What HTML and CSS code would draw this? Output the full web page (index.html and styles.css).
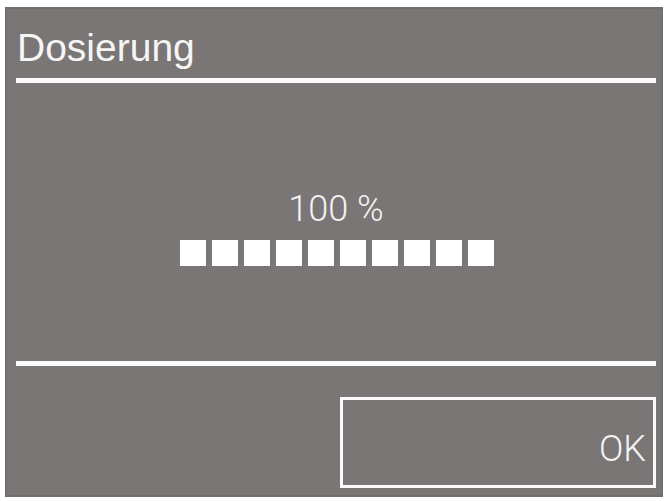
FILE: index.html
```html
<!DOCTYPE html>
<html lang="de">
<head>
<meta charset="utf-8">
<title>Dosierung</title>
<link rel="stylesheet" href="styles.css">
</head>
<body>
<div class="panel">
  <div class="title">Dosierung</div>
  <div class="rule"></div>
  <div class="progress">
    <div class="percent">100 %</div>
    <div class="blocks">
      <span class="block"></span><span class="block"></span><span class="block"></span><span class="block"></span><span class="block"></span><span class="block"></span><span class="block"></span><span class="block"></span><span class="block"></span><span class="block"></span>
    </div>
  </div>
  <div class="rule rule-bottom"></div>
  <div class="ok-button">OK</div>
</div>
</body>
</html>
```

FILE: styles.css
```css
html, body {
  margin: 0;
  padding: 0;
  background: #ffffff;
}

body {
  width: 668px;
  height: 501px;
  overflow: hidden;
  font-family: "Liberation Sans", Arial, sans-serif;
}

.panel {
  margin: 7px 0 0 5px;
  width: 658px;
  height: 490px;
  box-sizing: border-box;
  background: #7a7676;
  box-shadow: inset 0 0 0 2px #716e6e;
  padding: 18px 7px 0 11px;
  display: flex;
  flex-direction: column;
  color: #f7f7f7;
}

.title {
  font-size: 39px;
  line-height: 45px;
  height: 45px;
  margin-left: 1px;
  color: #f5f5f5;
}

.rule {
  height: 5px;
  background: #fbfbfb;
  margin-top: 8px;
}

.progress {
  display: flex;
  flex-direction: column;
  align-items: center;
  margin-top: 105px;
}

.percent {
  font-family: "Roboto", "Liberation Sans", sans-serif;
  font-weight: 300;
  font-size: 36px;
  line-height: 42px;
  color: #f2f2f2;
}

.blocks {
  display: flex;
  gap: 6px;
  margin-top: 10px;
  margin-left: 1px;
}

.block {
  display: block;
  width: 26px;
  height: 26px;
  background: #ffffff;
}

.rule-bottom {
  margin-top: 95px;
}

.ok-button {
  align-self: flex-end;
  margin-top: 31px;
  width: 316px;
  height: 91px;
  box-sizing: border-box;
  border: 3px solid #fbfbfb;
  padding: 28px 7px 0 0;
  text-align: right;
  font-family: "Roboto", "Liberation Sans", sans-serif;
  font-weight: 300;
  font-size: 36px;
  line-height: 42px;
  color: #f2f2f2;
}
```
